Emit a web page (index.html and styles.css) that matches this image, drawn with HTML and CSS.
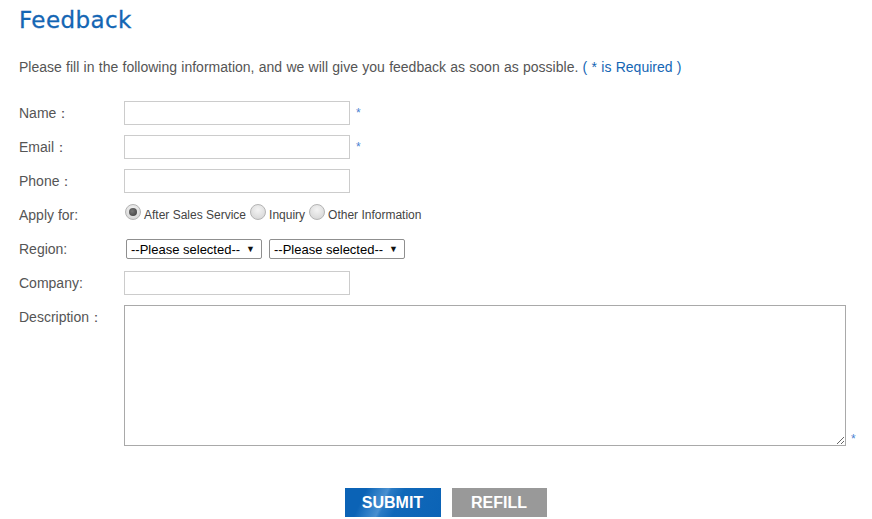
FILE: index.html
```html
<!DOCTYPE html>
<html>
<head>
<meta charset="utf-8">
<link rel="stylesheet" href="styles.css">
</head>
<body>
<div class="page">
  <h1 class="title">Feedback</h1>
  <p class="intro">Please fill in the following information, and we will give you feedback as soon as possible. <span class="req">( * is Required )</span></p>
  <form class="form">
    <div class="row">
      <label class="lbl">Name：</label>
      <input class="txt" type="text"><span class="star">*</span>
    </div>
    <div class="row">
      <label class="lbl">Email：</label>
      <input class="txt" type="text"><span class="star">*</span>
    </div>
    <div class="row">
      <label class="lbl">Phone：</label>
      <input class="txt" type="text">
    </div>
    <div class="row">
      <label class="lbl">Apply for:</label>
      <div class="radios">
        <label class="opt"><input class="radio" type="radio" name="apply" checked>After Sales Service</label>
        <label class="opt"><input class="radio" type="radio" name="apply">Inquiry</label>
        <label class="opt"><input class="radio" type="radio" name="apply">Other Information</label>
      </div>
    </div>
    <div class="row">
      <label class="lbl">Region:</label>
      <div class="sel">--Please selected--<span class="arrow">▼</span></div>
      <div class="sel">--Please selected--<span class="arrow">▼</span></div>
    </div>
    <div class="row">
      <label class="lbl">Company:</label>
      <input class="txt" type="text">
    </div>
    <div class="row row-top">
      <label class="lbl">Description：</label>
      <div class="area-wrap">
        <textarea class="area"></textarea>
        <span class="star star-end">*</span>
      </div>
    </div>
    <div class="buttons">
      <button type="button" class="btn btn-submit">SUBMIT</button>
      <button type="button" class="btn btn-refill">REFILL</button>
    </div>
  </form>
</div>
</body>
</html>
```
FILE: styles.css
```css
* { box-sizing: border-box; }
html, body { margin: 0; padding: 0; background: #fff; }
body { font-family: "Liberation Sans", Arial, sans-serif; color: #555; }
.page { padding: 0 0 0 19px; }
.title {
  margin: 0;
  padding-top: 6px;
  height: 36px;
  font-family: "DejaVu Sans", sans-serif;
  font-weight: normal;
  font-size: 23px;
  line-height: 28px;
  color: #1466b4;
  letter-spacing: 0.4px;
  -webkit-text-stroke: 0.3px #1466b4;
}
.intro {
  margin: 22px 0 0;
  font-size: 14px;
  line-height: 18px;
  color: #555;
  word-spacing: 0.4px;
}
.req { color: #1466b4; }
.form { margin-top: 25px; }
.row {
  display: flex;
  align-items: center;
  min-height: 24px;
  margin-bottom: 10px;
}
.row-top { align-items: flex-start; }
.lbl {
  width: 105px;
  flex: none;
  font-size: 14px;
  line-height: 24px;
  color: #555;
}
.txt {
  width: 226px;
  height: 24px;
  border: 1px solid #ccc;
  margin: 0;
  padding: 0 4px;
  font: 13px "Liberation Sans", Arial, sans-serif;
  outline: none;
}
.star {
  color: #4a7fd0;
  font-size: 12px;
  margin-left: 6px;
  align-self: flex-start;
  line-height: 24px;
}
.radios { display: flex; align-items: center; }
.opt {
  display: flex;
  align-items: center;
  font-size: 12px;
  color: #444;
  line-height: 24px;
  margin-right: 3px;
}
.radio {
  -webkit-appearance: none;
  appearance: none;
  width: 16px;
  height: 16px;
  margin: 0 3px 0 1px;
  border-radius: 50%;
  border: 1px solid #b4b4b4;
  background: radial-gradient(circle at 50% 35%, #f4f4f4 0%, #dcdcdc 70%, #cfcfcf 100%);
  position: relative;
  top: -3px;
}
.radio:checked::after {
  content: "";
  position: absolute;
  left: 3px;
  top: 3px;
  width: 8px;
  height: 8px;
  border-radius: 50%;
  background: radial-gradient(circle at 40% 40%, #777 0%, #3a3a3a 100%);
}
.sel {
  display: flex;
  align-items: center;
  justify-content: space-between;
  width: 136px;
  height: 20px;
  margin-left: 2px;
  margin-right: 7px;
  padding: 0 6px 0 4px;
  border: 1px solid #8f8f8f;
  border-radius: 2px;
  font-size: 13px;
  color: #000;
  background: #fff;
}
.sel + .sel { margin-left: 0; }
.arrow { font-size: 9px; color: #111; }
.area-wrap { display: flex; align-items: flex-end; }
.area {
  display: block;
  width: 722px;
  height: 141px;
  margin: 0;
  border: 1px solid #a9a9a9;
  resize: both;
  outline: none;
}
.star-end { align-self: flex-end; line-height: 10px; margin-left: 5px; margin-bottom: 2px; }
.buttons {
  display: flex;
  justify-content: center;
  gap: 11px;
  margin-top: 42px;
}
.btn {
  width: 96px;
  height: 29px;
  border: none;
  margin: 0;
  padding: 0;
  font: bold 16px "Liberation Sans", Arial, sans-serif;
  color: #fff;
  cursor: pointer;
}
.btn-submit {
  background: linear-gradient(115deg, #0b63b6 0%, #0b63b6 20%, #2a7bc5 30%, #4a90d0 40%, #2a7bc5 43%, #1068b9 55%, #0b63b6 100%);
}
.btn-refill { background: #999; width: 95px; }
```
